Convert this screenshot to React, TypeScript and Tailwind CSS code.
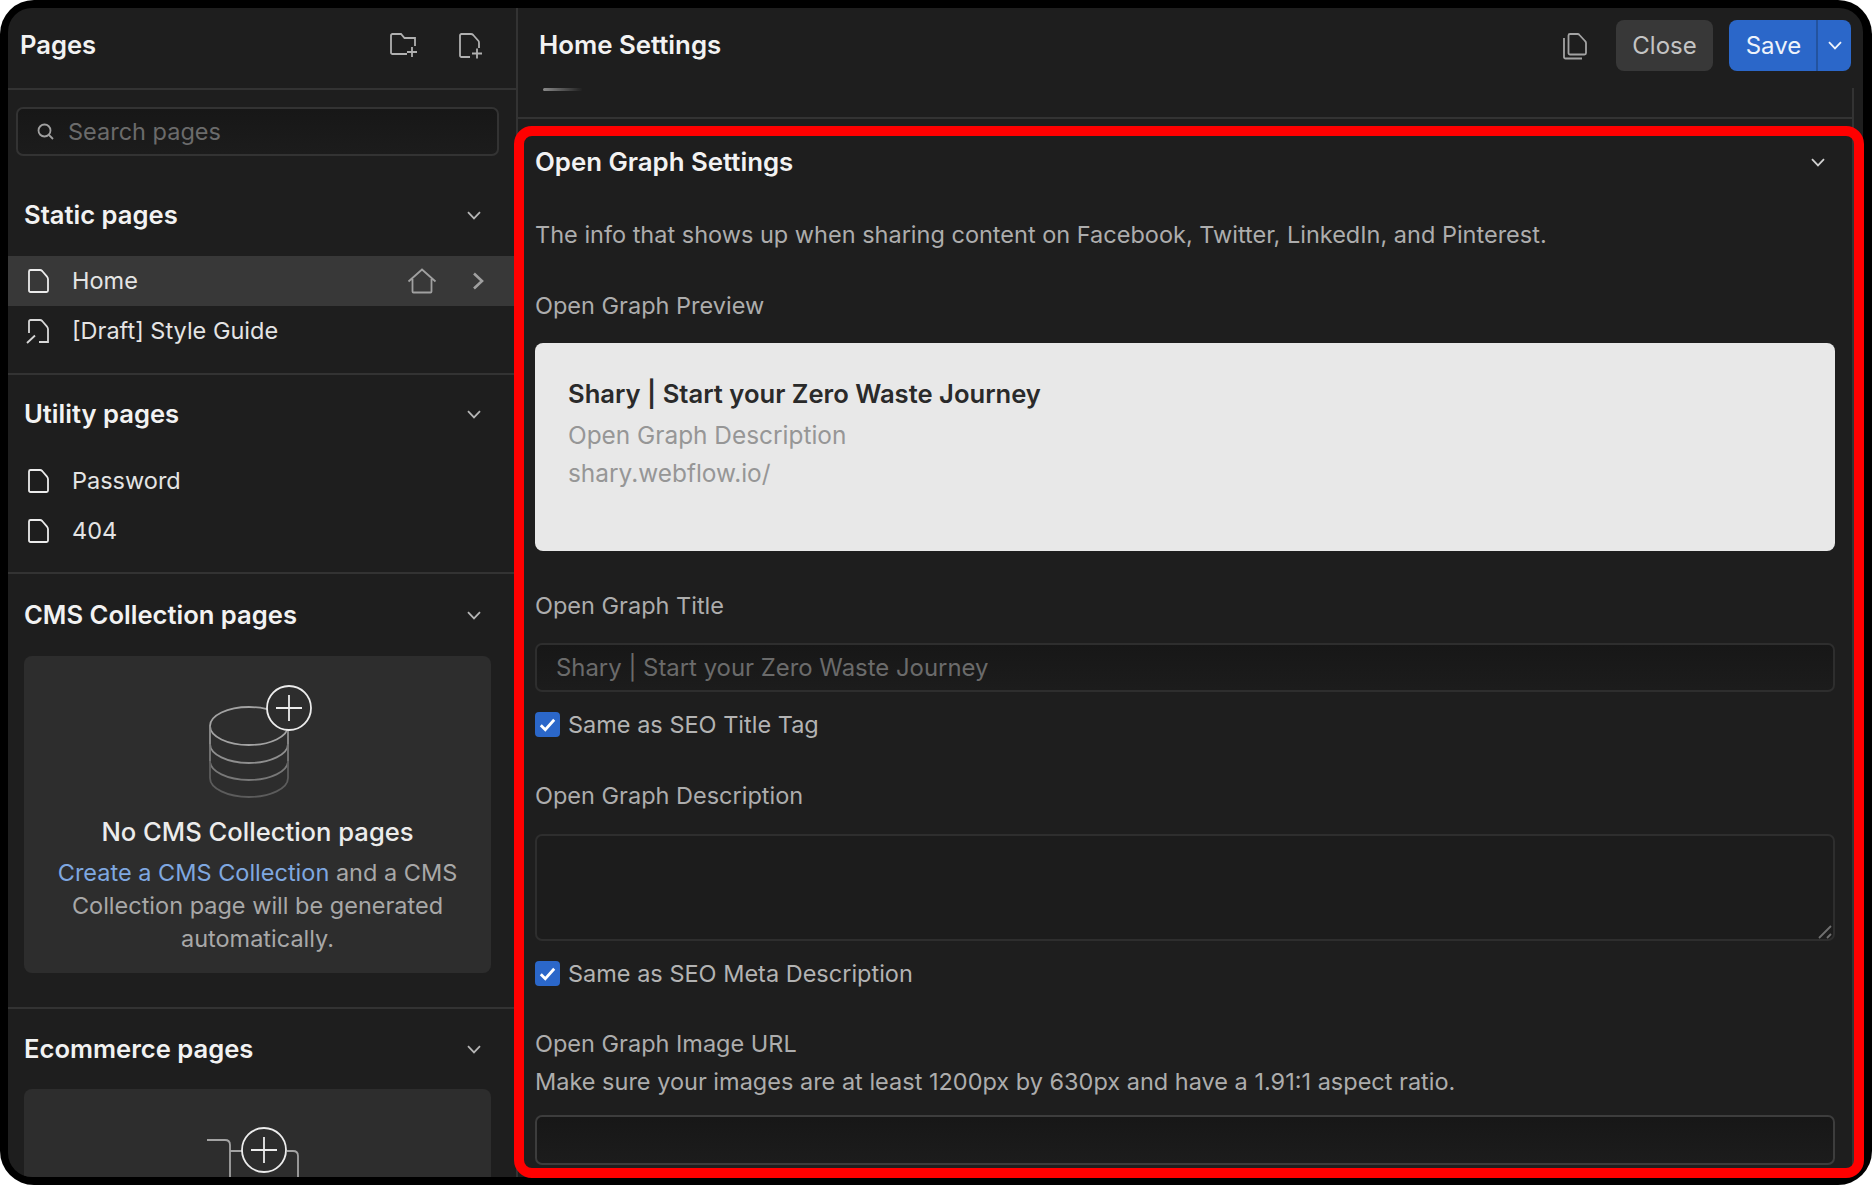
import React from "react";

const FONT = "font-['Inter','Noto_Sans',sans-serif]";

const ChevronDown = ({ className = "" }: { className?: string }) => (
  <svg width="14" height="9" viewBox="0 0 14 9" fill="none" className={className}>
    <path d="M1 1.2 7 7.4l6-6.2" stroke="currentColor" strokeWidth="1.8" />
  </svg>
);

const FileIcon = () => (
  <svg width="23" height="26" viewBox="0 0 23 26" fill="none" className="text-[#ececec]">
    <path
      d="M2 3.5A1.5 1.5 0 0 1 3.5 2H13c1 0 1.6.4 2.2 1l4.6 5.4c.8.9 1.200 1.600 1.200 2.800v11.300a1.500 1.500 0 0 1-1.500 1.500h-16A1.500 1.500 0 0 1 2 22.500Z"
      stroke="currentColor"
      strokeWidth="1.8"
    />
  </svg>
);

const DraftIcon = () => (
  <svg width="26" height="26" viewBox="0 0 26 26" fill="none" className="-ml-[2px] text-[#d8d8d8]">
    <path
      d="M4 15V3.500A1.500 1.500 0 0 1 5.500 2H15c1 0 1.600.4 2.200 1l4.600 5.400c.8.9 1.200 1.600 1.200 2.800V24h-9"
      stroke="currentColor"
      strokeWidth="1.8"
    />
    <path d="M2 25l8-7.500" stroke="currentColor" strokeWidth="1.8" />
  </svg>
);

const SectionHeader = ({ title }: { title: string }) => (
  <div className="flex h-[40px] items-center justify-between pl-[16px] pr-[35px]">
    <span className="text-[25.6px] font-semibold text-[#f2f2f2]">{title}</span>
    <ChevronDown className="text-[#b5b5b5]" />
  </div>
);

const PageRow = ({
  label,
  active,
  draft,
}: {
  label: string;
  active?: boolean;
  draft?: boolean;
}) => (
  <div className={`flex h-[50px] items-center pl-[19px] pr-[32px] ${active ? "bg-[#383838]" : ""}`}>
    <span className="flex w-[45px] shrink-0 items-center">{draft ? <DraftIcon /> : <FileIcon />}</span>
    <span className="flex-1 text-[23.5px] text-[#e4e4e4]">{label}</span>
    {active && (
      <>
        <svg width="30" height="26" viewBox="0 0 30 26" fill="none" className="text-[#a0a0a0]">
          <path
            d="M1.500 13.500 15 1.500l13.500 12M5.500 11v12.500a1 1 0 0 0 1 1h17a1 1 0 0 0 1-1V11"
            stroke="currentColor"
            strokeWidth="1.800"
          />
        </svg>
        <svg width="12" height="18" viewBox="0 0 12 18" fill="none" className="ml-[35px] text-[#a0a0a0]">
          <path d="M2 1.500 10 9l-8 7.500" stroke="currentColor" strokeWidth="2.600" />
        </svg>
      </>
    )}
  </div>
);

const Label = ({ children, className = "" }: { children: React.ReactNode; className?: string }) => (
  <div className={`h-[32px] text-[23.5px] leading-[32px] text-[#adadad] ${className}`}>{children}</div>
);

const CheckRow = ({ label, className = "" }: { label: string; className?: string }) => (
  <div className={`flex h-[25px] items-center ${className}`}>
    <span className="flex h-[25px] w-[25px] shrink-0 items-center justify-center rounded-[4px] bg-[#2b67c9]">
      <svg width="17" height="14" viewBox="0 0 17 14" fill="none">
        <path d="M1.800 7.200 6.300 11.800 15.200 1.800" stroke="#fff" strokeWidth="2.800" />
      </svg>
    </span>
    <span className="ml-[8px] text-[23.5px] text-[#b3b3b3]">{label}</span>
  </div>
);

const DatabasePlus = () => (
  <svg width="104" height="114" viewBox="0 0 104 114" fill="none" className="block">
    <ellipse cx="40" cy="41" rx="39" ry="19" stroke="#a3a3a3" strokeWidth="1.800" />
    <path d="M1 41V59A39 19 0 0 0 79 59V41" stroke="#8f8f8f" strokeWidth="1.800" />
    <path d="M1 59V76A39 19 0 0 0 79 76V59" stroke="#787878" strokeWidth="1.800" />
    <path d="M1 76V93A39 19 0 0 0 79 93V76" stroke="#5c5c5c" strokeWidth="1.800" />
    <circle cx="80" cy="23" r="22" fill="#2d2d2d" stroke="#ececec" strokeWidth="1.800" />
    <path d="M80 10v26M67 23h26" stroke="#ececec" strokeWidth="1.800" />
  </svg>
);

const INPUT_BG = "bg-linear-to-b from-[#171717] to-[#1c1c1c]";

export default function App() {
  return (
    <div className={`h-[1186px] w-[1872px] overflow-hidden bg-white ${FONT}`}>
      <div className="relative h-[1185px] rounded-[34px] bg-black pb-[8px] pl-[8px] pr-[9px] pt-[8px]">
        <div className="flex h-[1169px] overflow-hidden rounded-[24px] bg-[#1e1e1e]">
          {/* sidebar */}
          <aside className="w-[510px] shrink-0 overflow-hidden border-r-2 border-[#333333]">
            <div className="flex h-[82px] items-center justify-between border-b-2 border-[#333333] pb-[5px] pl-[12px] pr-[33px]">
              <span className="text-[25.6px] font-semibold text-[#f2f2f2]">Pages</span>
              <div className="flex items-center gap-[41px]">
                <svg width="28" height="25" viewBox="0 0 28 25" fill="none" className="text-[#b0b0b0]">
                  <path
                    d="M17 21H2.500A1.500 1.500 0 0 1 1 19.500v-17A1.500 1.500 0 0 1 2.500 1H11l3.500 4H25v8"
                    stroke="currentColor"
                    strokeWidth="1.800"
                  />
                  <path d="M22 14v10M17 19h10" stroke="currentColor" strokeWidth="1.800" />
                </svg>
                <svg width="24" height="26" viewBox="0 0 24 26" fill="none" className="text-[#b0b0b0]">
                  <path
                    d="M11 24H2.500A1.500 1.500 0 0 1 1 22.500v-20A1.500 1.500 0 0 1 2.500 1H12c1 0 1.500.3 2.200 1l5.300 6c.4.500.500 1 .500 2v5"
                    stroke="currentColor"
                    strokeWidth="1.800"
                  />
                  <path d="M18 15.500v10M13 20.500h10" stroke="currentColor" strokeWidth="1.800" />
                </svg>
              </div>
            </div>
            <div className={`ml-[8px] mr-[17px] mt-[17px] flex h-[49px] items-center rounded-[7px] border-2 border-[#333333] pl-[19px] ${INPUT_BG}`}>
              <svg width="17" height="17" viewBox="0 0 17 17" fill="none" className="text-[#a0a0a0]">
                <circle cx="7.500" cy="7.500" r="6" stroke="currentColor" strokeWidth="1.800" />
                <path d="M12 12l4 4" stroke="currentColor" strokeWidth="1.800" />
              </svg>
              <span className="ml-[14px] text-[23.5px] text-[#6b6b6b]">Search pages</span>
            </div>

            <div className="mt-[39px]">
              <SectionHeader title="Static pages" />
            </div>
            <div className="mt-[21px]">
              <PageRow label="Home" active />
              <PageRow label="[Draft] Style Guide" draft />
            </div>
            <div className="mt-[17px] h-[2px] bg-[#333333]" />

            <div className="mt-[19px]">
              <SectionHeader title="Utility pages" />
            </div>
            <div className="mt-[22px]">
              <PageRow label="Password" />
              <PageRow label="404" />
            </div>
            <div className="mt-[16px] h-[2px] bg-[#333333]" />

            <div className="mt-[21px]">
              <SectionHeader title="CMS Collection pages" />
            </div>
            <div className="ml-[16px] mr-[25px] mt-[21px] flex h-[317px] flex-col items-center rounded-[8px] bg-[#2d2d2d] pt-[29px]">
              <div className="ml-[7px]">
                <DatabasePlus />
              </div>
              <div className="mt-[16px] text-[25.6px] font-medium leading-[33px] text-[#ececec]">No CMS Collection pages</div>
              <p className="mt-[8px] w-[440px] text-center text-[23.5px] leading-[33px] text-[#a8a8a8]">
                <span className="text-[#7fa8e0]">Create a CMS Collection</span> and a CMS Collection page will be generated automatically.
              </p>
            </div>
            <div className="mt-[34px] h-[2px] bg-[#333333]" />

            <div className="mt-[20px]">
              <SectionHeader title="Ecommerce pages" />
            </div>
            <div className="ml-[16px] mr-[25px] mt-[20px] h-[120px] rounded-[8px] bg-[#2d2d2d] pl-[183px] pt-[38px]">
              <svg width="95" height="50" viewBox="0 0 95 50" fill="none" className="block">
                <path d="M0 13h18c3 0 5 2 5 5v32M23 24h14M80 24h6c3 0 5 2 5 5v21" stroke="#a3a3a3" strokeWidth="1.800" />
                <circle cx="57" cy="23" r="22" fill="#2d2d2d" stroke="#ececec" strokeWidth="1.800" />
                <path d="M57 10v26M44 23h26" stroke="#ececec" strokeWidth="1.800" />
              </svg>
            </div>
          </aside>

          {/* main */}
          <main className="flex min-w-0 flex-1 flex-col">
            <div className="flex h-[80px] shrink-0 items-center pb-[5px] pl-[21px] pr-[12px]">
              <span className="text-[25.8px] font-semibold text-[#f2f2f2]">Home Settings</span>
              <svg width="26" height="28" viewBox="0 0 26 28" fill="none" className="ml-auto text-[#a3a3a3]">
                <path
                  d="M8 2h7.500c.8 0 1.500.3 2 1l5.500 6c.6.600 1 1.200 1 2v10a1.500 1.500 0 0 1-1.500 1.500h-14.500A1.500 1.500 0 0 1 6.500 21V3.500A1.500 1.500 0 0 1 8 2Z"
                  stroke="currentColor"
                  strokeWidth="1.800"
                />
                <path d="M2 6v19a1.500 1.500 0 0 0 1.500 1.500H20" stroke="currentColor" strokeWidth="1.800" />
              </svg>
              <button className="ml-[28px] flex h-[51px] w-[97px] items-center justify-center rounded-[8px] bg-[#383838] text-[24px] text-[#c4c4c4]">
                Close
              </button>
              <div className="ml-[16px] flex h-[51px] w-[122px] rounded-[8px] bg-[#2b67c9] text-[#eef3fb]">
                <span className="flex w-[89px] items-center justify-center border-r-2 border-[#23539f] pl-[2px] text-[24px]">Save</span>
                <span className="flex flex-1 items-center justify-center">
                  <ChevronDown />
                </span>
              </div>
            </div>

            <div className="mr-[9px] min-h-0 flex-1 overflow-hidden border-r-2 border-[#333333]">
              <div className="h-[31px] border-b-2 border-[#333333] pl-[25px]">
                <div className="h-[3px] w-[40px] rounded-full bg-linear-to-r from-[#8a8a8a] to-transparent blur-[0.5px]" />
              </div>
              <div className="px-[17px] pt-[27px]">
                <div className="flex h-[32px] items-center justify-between">
                  <span className="text-[25.8px] font-semibold text-[#f2f2f2]">Open Graph Settings</span>
                  <ChevronDown className="mr-[10px] text-[#d0d0d0]" />
                </div>
                <Label className="mt-[41px] text-[#a1a1a1]">
                  The info that shows up when sharing content on Facebook, Twitter, LinkedIn, and Pinterest.
                </Label>
                <Label className="mt-[39px]">Open Graph Preview</Label>
                <div className="mt-[21px] h-[208px] rounded-[8px] bg-[#e8e8e8] pl-[33px] pt-[33px]">
                  <div className="text-[25.6px] font-semibold leading-[36px] text-[#2a2a2a]">Shary | Start your Zero Waste Journey</div>
                  <div className="mt-[5px] text-[24.4px] leading-[36px] text-[#969696]">Open Graph Description</div>
                  <div className="mt-[2px] text-[24.4px] leading-[36px] text-[#969696]">shary.webflow.io/</div>
                </div>
                <Label className="mt-[39px]">Open Graph Title</Label>
                <input
                  readOnly
                  placeholder="Shary | Start your Zero Waste Journey"
                  className={`mt-[21px] block h-[49px] w-full rounded-[7px] border-2 border-[#2e2e2e] pl-[19px] text-[23.9px] placeholder:text-[#6b6b6b] ${INPUT_BG}`}
                />
                <CheckRow label="Same as SEO Title Tag" className="mt-[20px]" />
                <Label className="mt-[43px]">Open Graph Description</Label>
                <div className="relative mt-[22px] h-[107px]">
                  <textarea
                    readOnly
                    className="block h-full w-full resize-none rounded-[7px] border-2 border-[#2e2e2e] bg-[#1c1c1c]"
                  />
                  {/* resize handle */}
                  <svg width="14" height="14" viewBox="0 0 14 14" fill="none" className="absolute bottom-[2px] right-[3px]">
                    <path d="M1 13 13 1M9 13l4-4" stroke="#707070" strokeWidth="1.800" />
                  </svg>
                </div>
                <CheckRow label="Same as SEO Meta Description" className="mt-[20px]" />
                <Label className="mt-[42px]">Open Graph Image URL</Label>
                <Label className="mt-[6px] text-[#a1a1a1]">Make sure your images are at least 1200px by 630px and have a 1.91:1 aspect ratio.</Label>
                <input
                  readOnly
                  className={`mt-[17px] block h-[50px] w-full rounded-[7px] border-2 border-[#3d3d3d] ${INPUT_BG}`}
                />
              </div>
            </div>
          </main>
        </div>

        {/* red highlight drawn over the open graph section */}
        <div className="pointer-events-none absolute left-[514px] top-[126px] h-[1052px] w-[1350px] rounded-[18px] border-[10px] border-[#ff0000]" />
      </div>
    </div>
  );
}
